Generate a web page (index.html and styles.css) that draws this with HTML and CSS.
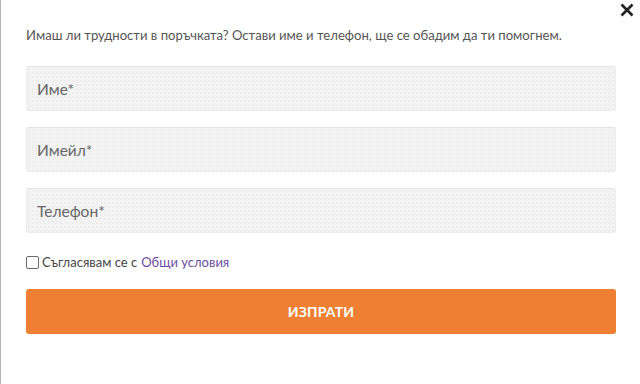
FILE: index.html
```html
<!DOCTYPE html>
<html lang="bg">
<head>
<meta charset="utf-8">
<link rel="stylesheet" href="styles.css">
</head>
<body>
<div class="modal">
  <button class="close" aria-label="Затвори">
    <svg width="14" height="14" viewBox="0 0 14 14"><path d="M1.5 1.5 L12.5 12.5 M12.5 1.5 L1.5 12.5" stroke="#222" stroke-width="2.6" stroke-linecap="butt"/></svg>
  </button>
  <p class="intro">Имаш ли трудности в поръчката? Остави име и телефон, ще се обадим да ти помогнем.</p>
  <form class="form">
    <input class="field" type="text" placeholder="Име*">
    <input class="field" type="email" placeholder="Имейл*">
    <input class="field" type="tel" placeholder="Телефон*">
    <label class="agree"><span class="box"></span>Съгласявам се с <a href="#" class="link">Общи условия</a></label>
    <button type="button" class="submit">ИЗПРАТИ</button>
  </form>
</div>
</body>
</html>
```
FILE: styles.css
```css
html, body { margin: 0; padding: 0; background: #fff; }
body { font-family: "Lato", "Open Sans", sans-serif; color: #555; }
.modal {
  position: relative;
  box-sizing: border-box;
  width: 640px;
  height: 384px;
  border-left: 1px solid #b5b5b5;
  padding: 25px 24px 0 25px;
}
.close {
  position: absolute;
  top: 3px;
  right: 6px;
  border: 0;
  background: none;
  padding: 0;
  width: 14px;
  height: 14px;
  cursor: pointer;
}
.close svg { display: block; }
.intro {
  margin: 0;
  font-size: 13.1px;
  line-height: 20px;
  color: #555;
}
.form {
  display: flex;
  flex-direction: column;
  margin-top: 21px;
}
.field {
  box-sizing: border-box;
  height: 45px;
  margin-bottom: 16px;
  border: 1px solid #ececec;
  border-top-color: #e2e2e2;
  border-radius: 3px;
  background-color: #f3f3f3;
  background-image: radial-gradient(#e6e6e6 0.6px, transparent 0.8px);
  background-size: 4px 4px;
  padding: 0 10px;
  font-family: inherit;
  font-size: 15.5px;
  color: #555;
  outline: none;
}
.field::placeholder { color: #666; }
.field:last-of-type { margin-bottom: 0; }
.agree {
  display: flex;
  align-items: center;
  margin-top: 20px;
  font-size: 13px;
  line-height: 18px;
  color: #444;
  height: 18px;
}
.box {
  box-sizing: border-box;
  width: 13px;
  height: 13px;
  border: 1px solid #6b6b6b;
  border-radius: 2px;
  margin-right: 3px;
  background: #fff;
}
.link { color: #6b4d9e; text-decoration: none; margin-left: 4px; }
.submit {
  margin-top: 18px;
  height: 45px;
  border: 0;
  border-radius: 3px;
  background: #ee7f33;
  color: #fff;
  font-family: inherit;
  font-weight: 700;
  font-size: 14px;
  letter-spacing: 0.2px;
  cursor: pointer;
}
```
